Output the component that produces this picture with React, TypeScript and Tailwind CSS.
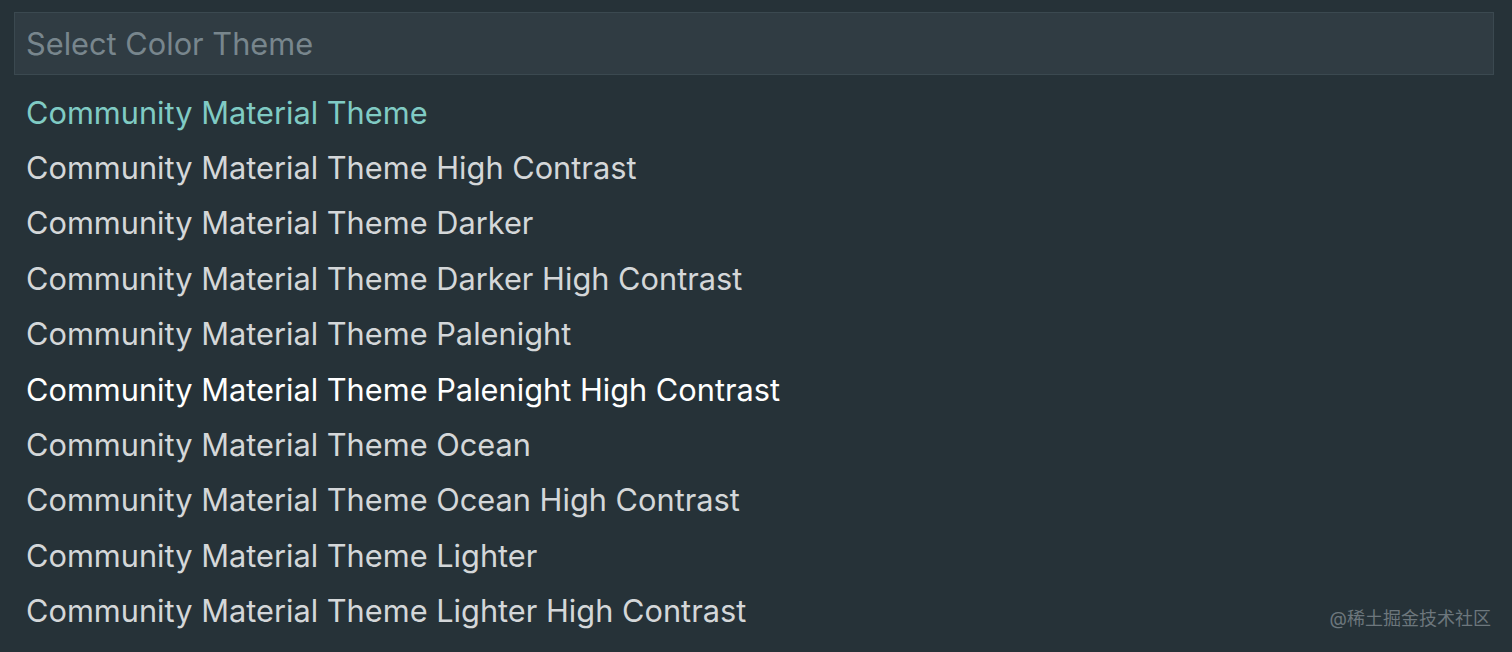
const themes = [
  'Community Material Theme',
  'Community Material Theme High Contrast',
  'Community Material Theme Darker',
  'Community Material Theme Darker High Contrast',
  'Community Material Theme Palenight',
  'Community Material Theme Palenight High Contrast',
  'Community Material Theme Ocean',
  'Community Material Theme Ocean High Contrast',
  'Community Material Theme Lighter',
  'Community Material Theme Lighter High Contrast',
];

export default function App() {
  return (
    <div
      className="relative h-[652px] w-[1512px] overflow-hidden bg-[#263238] pl-[14px] pr-[18px] pt-[12px]"
      style={{ fontFamily: 'Inter, "Noto Sans CJK SC", sans-serif' }}
    >
      {/* Quick pick input */}
      <div className="flex h-[63px] items-center border border-[#3b4950] bg-[#303c43] px-[11px] pt-[2px]">
        <span className="text-[30.75px] text-[#78868d]">Select Color Theme</span>
      </div>

      {/* Theme list */}
      <ul className="mt-[10px]">
        {themes.map((t, i) => (
          <li
            key={t}
            className={
              'flex h-[55.4px] items-center px-[12px] text-[30.75px] ' +
              (i === 0 ? 'text-[#80cbc4]' : i === 5 ? 'text-white' : 'text-[#d4d7d9]')
            }
          >
            {t}
          </li>
        ))}
      </ul>

      {/* Watermark */}
      <div className="absolute bottom-[20px] right-[21px] text-[18px] text-[#6d777d]">@稀土掘金技术社区</div>
    </div>
  );
}
